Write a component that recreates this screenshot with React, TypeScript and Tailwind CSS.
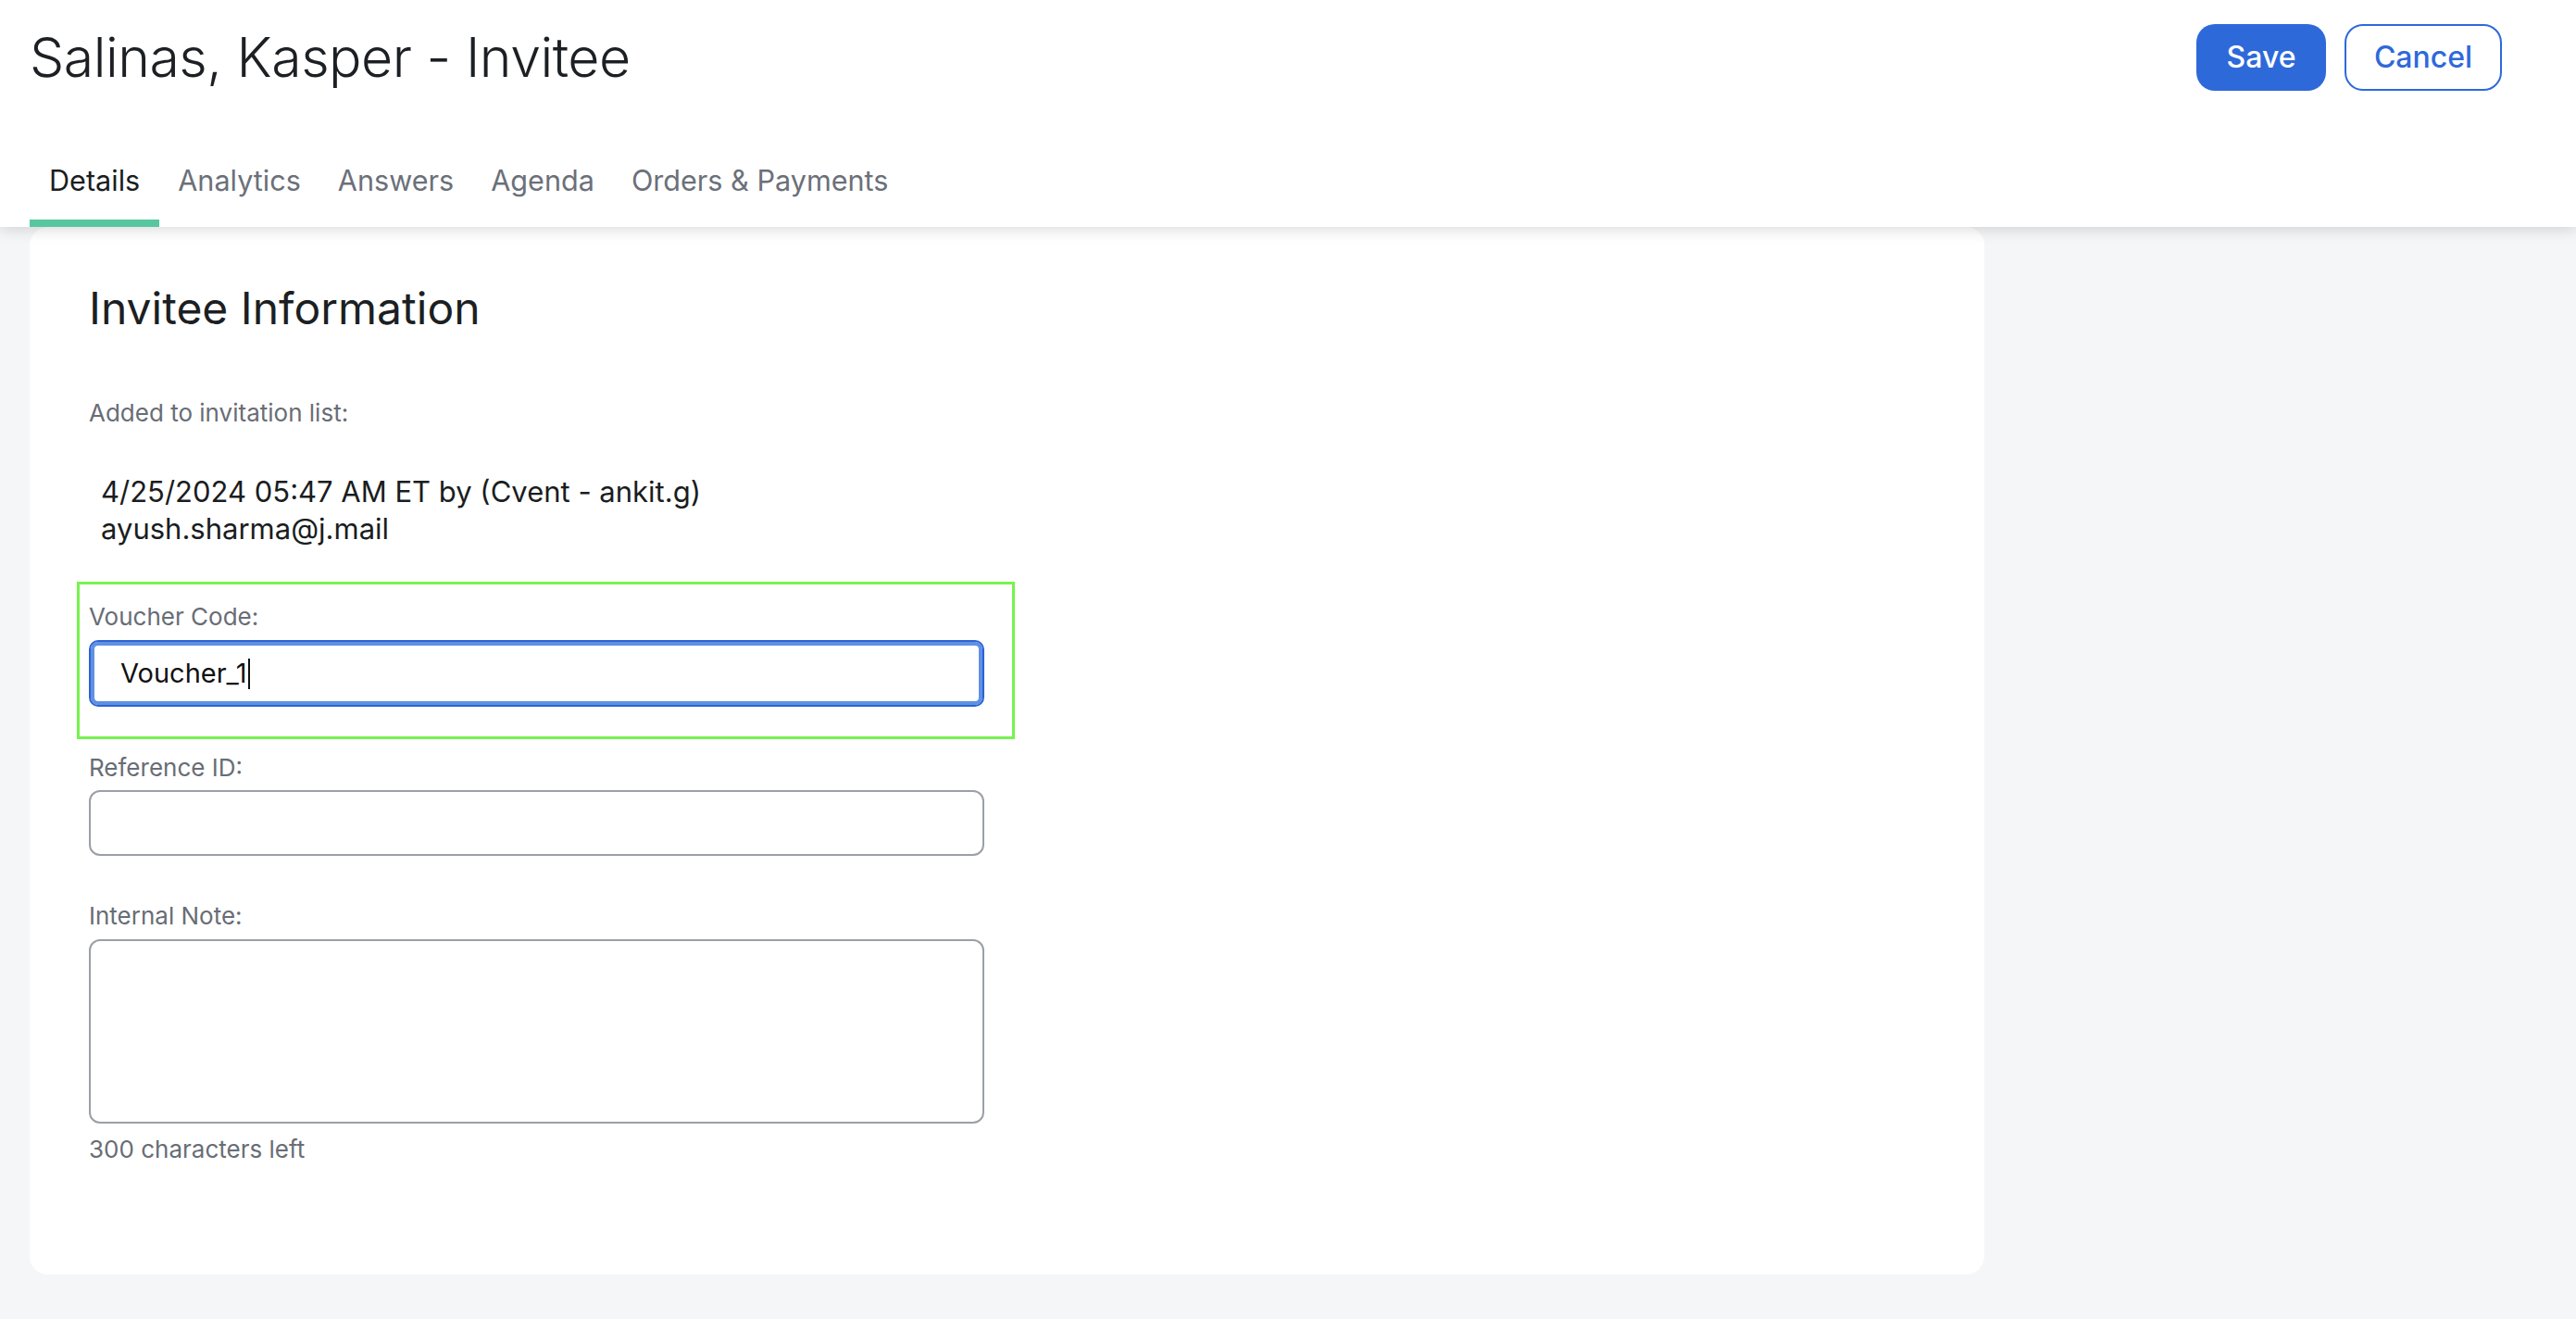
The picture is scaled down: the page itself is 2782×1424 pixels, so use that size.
import React from 'react';

const tabs = ['Details', 'Analytics', 'Answers', 'Agenda', 'Orders & Payments'];

export default function App() {
  return (
    <div className="min-h-screen bg-[#f5f6f8] font-['Inter',sans-serif] text-[#1c1f23]">
      {/* Header */}
      <header className="relative z-10 bg-white shadow-[0_4px_14px_rgba(0,0,0,0.13)]">
        <div className="flex items-start justify-between pl-[32px] pr-[80px] pt-[26px]">
          <h1 className="mt-[6px] text-[59px] font-light leading-none tracking-[-0.5px]">
            Salinas, Kasper - Invitee
          </h1>
          <div className="flex gap-[20px]">
            <button className="h-[72px] w-[140px] rounded-[20px] bg-[#2e69da] text-[32px] font-medium text-white">
              Save
            </button>
            <button className="h-[72px] w-[170px] rounded-[20px] border-2 border-[#2e69da] bg-white text-[32px] font-medium text-[#2e69da]">
              Cancel
            </button>
          </div>
        </div>
        <nav className="mt-[82px] flex pl-[32px]">
          {tabs.map((t, i) => (
            <div
              key={t}
              className={
                i === 0
                  ? 'border-b-[8px] border-[#58c7a0] px-[21px] pb-[27px] text-[30.6px] leading-[30px] text-[#1a1d21]'
                  : 'border-b-[8px] border-transparent px-[20px] pb-[27px] text-[30.6px] leading-[30px] text-[#6b7079]'
              }
            >
              {t}
            </div>
          ))}
        </nav>
      </header>

      {/* Content */}
      <main className="px-[32px] pb-[48px]">
        <section className="w-[2111px] rounded-[20px] bg-white pb-[122px] pl-[64px] pt-[64px]">
          <h2 className="text-[48px] leading-none">Invitee Information</h2>

          <p className="mt-[76px] text-[26px] leading-none text-[#686d75]">Added to invitation list:</p>
          <div className="mt-[52px] pl-[13px] text-[31px] leading-[40px] text-[#1a1d21]">
            <div>4/25/2024 05:47 AM ET by (Cvent - ankit.g)</div>
            <div>ayush.sharma@j.mail</div>
          </div>

          {/* Voucher code (highlighted) */}
          <div className="-ml-[13px] mt-[37px] w-[1013px] border-[3px] border-[#77f34f] pb-[32px] pl-[10px] pr-[30px] pt-[22px]">
            <label className="block text-[26px] leading-none text-[#686d75]">Voucher Code:</label>
            <div className="mt-[12px] flex h-[72px] w-[967px] items-center rounded-[10px] border-2 border-[#2d63d3] pl-[32px] shadow-[inset_0_0_0_4px_#5e91e4]">
              <span className="text-[29px] text-[#111]">Voucher_1</span>
              <span className="ml-[1px] h-[33px] w-[2px] bg-[#111]" />
            </div>
          </div>

          <label className="mt-[18px] block text-[26px] leading-none text-[#686d75]">Reference ID:</label>
          <div className="mt-[11px] h-[71px] w-[967px] rounded-[12px] border-2 border-[#9b9fa6] bg-white" />

          <label className="mt-[52px] block text-[26px] leading-none text-[#686d75]">Internal Note:</label>
          <div className="mt-[12px] h-[199px] w-[967px] rounded-[12px] border-2 border-[#9b9fa6] bg-white" />
          <p className="mt-[15px] text-[26px] leading-none text-[#686d75]">300 characters left</p>
        </section>
      </main>
    </div>
  );
}
